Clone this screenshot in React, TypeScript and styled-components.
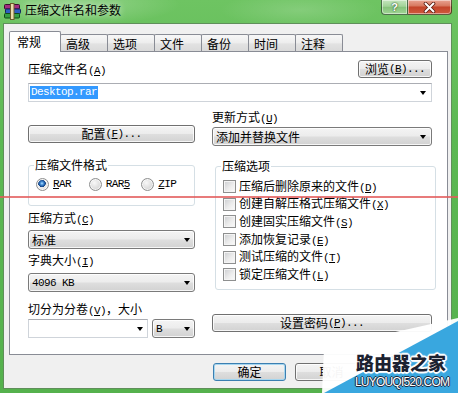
import React from "react";
import styled, { createGlobalStyle } from "styled-components";

const cjk = `"Noto Sans CJK SC", "Liberation Sans", sans-serif`;
const mono = `"Liberation Mono", "DejaVu Sans Mono", monospace`;

const GlobalStyle = createGlobalStyle`
  html, body {
    margin: 0;
    padding: 0;
    background: #56b24e;
  }
  #root {
    width: 458px;
    height: 393px;
    overflow: hidden;
  }
`;

const Window = styled.div`
  position: relative;
  width: 458px;
  height: 393px;
  overflow: hidden;
  display: flex;
  flex-direction: column;
  font-family: ${cjk};
  font-size: 12px;
  line-height: 14px;
  color: #000;
  background:
    radial-gradient(ellipse 110px 22px at 70px 4px, rgba(255, 255, 255, 0.28), rgba(255, 255, 255, 0) 100%),
    radial-gradient(ellipse 80px 18px at 300px 10px, rgba(255, 255, 255, 0.16), rgba(255, 255, 255, 0) 100%),
    linear-gradient(180deg, #6ec462 0%, #5cb853 35%, #55b14d 100%);
`;

const TitleBar = styled.div`
  height: 23px;
  flex: none;
  display: flex;
  align-items: flex-start;
`;

const AppIcon = styled.svg`
  flex: none;
  margin: 3px 0 0 3px;
`;

const Title = styled.span`
  margin-left: 3px;
  line-height: 20px;
  text-shadow: 0 0 6px rgba(255, 255, 255, 0.75);
`;

const Caption = styled.div`
  display: flex;
  margin-left: auto;
  margin-right: 6px;
`;

const CaptionButton = styled.div<{ $close?: boolean }>`
  box-sizing: border-box;
  height: 15px;
  width: ${(p) => (p.$close ? 44 : 27)}px;
  display: flex;
  align-items: center;
  justify-content: center;
  border: 1px solid rgba(20, 50, 20, 0.65);
  border-top: none;
  ${(p) => (p.$close ? "border-left: none; border-bottom-right-radius: 4px;" : "border-bottom-left-radius: 4px;")}
  background: ${(p) =>
    p.$close
      ? "linear-gradient(180deg, #e9a392 0%, #d87a62 40%, #c4442a 52%, #cf5a3e 100%)"
      : "linear-gradient(180deg, #c4e5bd 0%, #a2d398 45%, #86c37b 52%, #a0d595 100%)"};
  box-shadow: inset 0 0 0 1px rgba(255, 255, 255, 0.45);
`;

const HelpGlyph = styled.span`
  font: bold 11px "Liberation Sans", sans-serif;
  line-height: 12px;
  color: #fff;
  text-shadow: 0 0 2px #2d5a2a, 0 0 1px #2d5a2a;
`;

const Frame = styled.div`
  flex: 1;
  margin: 0 6px 4px 3px;
  border: 1px solid #5f8f5a;
  background: #f0f0f0;
  padding: 7px 3px 0 5px;
  display: flex;
  flex-direction: column;
`;

const TabStrip = styled.div`
  display: flex;
  align-items: flex-end;
  height: 20px;
  position: relative;
  z-index: 1;
`;

const Tab = styled.div<{ $active?: boolean }>`
  box-sizing: border-box;
  position: relative;
  z-index: ${(p) => (p.$active ? 2 : 1)};
  width: ${(p) => (p.$active ? 52 : 48)}px;
  height: ${(p) => (p.$active ? 21 : 17)}px;
  margin-bottom: ${(p) => (p.$active ? -1 : 0)}px;
  margin-left: ${(p) => (p.$active ? 0 : -1)}px;
  padding: ${(p) => (p.$active ? "3px 0 0 7px" : "1px 0 0 5px")};
  line-height: ${(p) => (p.$active ? 14 : 15)}px;
  border: 1px solid #898c95;
  border-bottom: none;
  border-radius: 2px 2px 0 0;
  background: ${(p) =>
    p.$active ? "#fff" : "linear-gradient(180deg, #f7f7f7 0%, #ededed 50%, #e2e2e2 55%, #dadada 100%)"};
  white-space: nowrap;
`;

const Panel = styled.div`
  box-sizing: border-box;
  height: 304px;
  background: #fff;
  border: 1px solid #898c95;
  padding: 8px 15px 0 18px;
`;

const Footer = styled.div`
  display: flex;
  gap: 9px;
  margin-top: 8px;
  padding-left: 204px;
`;

const FileRow = styled.div`
  display: flex;
  align-items: flex-end;
  justify-content: space-between;
  height: 18px;
`;

const Label = styled.div<{ $mt?: number }>`
  margin-top: ${(p) => p.$mt ?? 0}px;
  line-height: 14px;
  white-space: nowrap;
`;

const Latin = styled.span`
  font-family: ${mono};
  font-size: 11px;
  letter-spacing: -0.6px;
`;

const PushButton = styled.button<{ $w?: number; $mt?: number; $default?: boolean }>`
  box-sizing: border-box;
  flex: none;
  width: ${(p) => (p.$w ? `${p.$w}px` : "100%")};
  height: 18px;
  margin: ${(p) => p.$mt ?? 0}px 0 0 0;
  padding: 0;
  display: flex;
  align-items: center;
  justify-content: center;
  font-family: ${cjk};
  font-size: 12px;
  line-height: 14px;
  color: #000;
  border: 1px solid ${(p) => (p.$default ? "#3c7fb1" : "#707070")};
  border-radius: 3px;
  background: linear-gradient(180deg, #f4f4f4 0%, #ececec 48%, #dedede 52%, #d2d2d2 100%);
  box-shadow: inset 0 0 0 1px ${(p) => (p.$default ? "#a6d6ef" : "rgba(255, 255, 255, 0.8)")};
  white-space: nowrap;
`;

const EditCombo = styled.div<{ $w?: number; $mt?: number }>`
  box-sizing: border-box;
  width: ${(p) => (p.$w ? `${p.$w}px` : "100%")};
  height: 19px;
  margin-top: ${(p) => p.$mt ?? 0}px;
  display: flex;
  align-items: center;
  padding-left: 1px;
  background: #fff;
  border: 1px solid #cfd4da;
  border-top-color: #abadb3;
`;

const DropSelect = styled.div<{ $w?: number; $mt?: number }>`
  box-sizing: border-box;
  width: ${(p) => (p.$w ? `${p.$w}px` : "100%")};
  height: 19px;
  margin-top: ${(p) => p.$mt ?? 0}px;
  display: flex;
  align-items: center;
  padding-left: 3px;
  border: 1px solid #7a7a7a;
  border-radius: 3px;
  background: linear-gradient(180deg, #f4f4f4 0%, #ececec 48%, #dedede 52%, #d2d2d2 100%);
  box-shadow: inset 0 0 0 1px rgba(255, 255, 255, 0.8);
  white-space: nowrap;
`;

const Arrow = styled.span<{ $mr?: number }>`
  flex: none;
  margin-left: auto;
  margin-right: ${(p) => p.$mr ?? 4}px;
  width: 0;
  height: 0;
  border-left: 3.5px solid transparent;
  border-right: 3.5px solid transparent;
  border-top: 4px solid #000;
`;

const Selected = styled.span`
  font-family: ${mono};
  font-size: 11px;
  letter-spacing: -0.6px;
  line-height: 13px;
  padding: 0 1px;
  background: #3399ff;
  color: #fff;
`;

const Columns = styled.div`
  display: flex;
  gap: 17px;
  margin-top: 8px;
`;

const Column = styled.div<{ $w: number }>`
  width: ${(p) => p.$w}px;
  display: flex;
  flex-direction: column;
`;

const Group = styled.fieldset<{ $mt?: number; $ml?: number; $mr?: number; $pb?: number }>`
  margin: ${(p) => p.$mt ?? 0}px ${(p) => p.$mr ?? 0}px 0 ${(p) => p.$ml ?? 0}px;
  padding: 5px 0 ${(p) => p.$pb ?? 5}px 7px;
  min-width: 0;
  border: 1px solid #d5dfe5;
  border-radius: 3px;
`;

const Legend = styled.legend`
  margin-left: -2px;
  padding: 0 1px;
  line-height: 14px;
`;

const RadioRow = styled.div`
  display: flex;
  height: 14px;
  align-items: center;
`;

const RadioItem = styled.label`
  width: 54px;
  display: flex;
  align-items: center;
  gap: 4px;
`;

const Radio = styled.span<{ $checked?: boolean }>`
  box-sizing: border-box;
  flex: none;
  width: 13px;
  height: 13px;
  border-radius: 50%;
  border: 1px solid #8e8f8f;
  background: ${(p) =>
    p.$checked
      ? "radial-gradient(circle at 45% 40%, #bfe4ff 0, #5aa2e4 1.2px, #1d5aa6 2.8px, #14417e 3.6px, rgba(0,0,0,0) 3.9px), radial-gradient(circle at 40% 35%, #f8f8f8 0%, #d9d9d9 100%)"
      : "radial-gradient(circle at 40% 35%, #f8f8f8 0%, #dcdcdc 60%, #c9c9c9 100%)"};
  box-shadow: inset 0 0 0 1px rgba(255, 255, 255, 0.7);
`;

const CheckRow = styled.label`
  height: 17.6px;
  display: flex;
  align-items: center;
  gap: 3px;
  white-space: nowrap;
`;

const CheckBox = styled.span`
  box-sizing: border-box;
  flex: none;
  width: 13px;
  height: 13px;
  border: 1px solid #8e8f8f;
  background: linear-gradient(135deg, #cbcdd0 0%, #ececec 55%, #fbfbfb 100%);
  box-shadow: inset 0 0 0 1px #f4f4f4;
`;

const ComboRow = styled.div`
  display: flex;
  gap: 4px;
  margin-top: 1px;
`;

const RedLine = styled.div`
  position: absolute;
  left: 0;
  right: 0;
  top: 196px;
  height: 2px;
  background: rgba(226, 90, 90, 0.8);
  pointer-events: none;
`;

const Watermark = styled.div`
  position: absolute;
  left: 316px;
  top: 316px;
  width: 142px;
  height: 77px;
  pointer-events: none;
`;

const WatermarkTitle = styled.div`
  position: absolute;
  left: 40px;
  top: 37px;
  font-family: ${cjk};
  font-size: 18px;
  font-weight: 900;
  line-height: 18px;
  color: #1c2231;
  white-space: nowrap;
  text-shadow:
    1px 0 0 #fff, -1px 0 0 #fff, 0 1px 0 #fff, 0 -1px 0 #fff,
    1px 1px 0 #fff, -1px -1px 0 #fff, 1px -1px 0 #fff, -1px 1px 0 #fff,
    2px 0 1px #fff, -2px 0 1px #fff, 0 2px 1px #fff, 0 -2px 1px #fff;
`;

const WatermarkSite = styled.div`
  position: absolute;
  left: 39px;
  top: 60px;
  font-family: "Liberation Sans", sans-serif;
  font-size: 12px;
  line-height: 12px;
  letter-spacing: -0.8px;
  color: #fff;
  white-space: nowrap;
  text-shadow:
    1px 0 0 #1c2a40, -1px 0 0 #1c2a40, 0 1px 0 #1c2a40, 0 -1px 0 #1c2a40;
`;

const Acc = ({ k, dots }: { k: string; dots?: boolean }) => (
  <Latin>
    (<u>{k}</u>){dots ? "..." : ""}
  </Latin>
);

const tabs = ["常规", "高级", "选项", "文件", "备份", "时间", "注释"];

const options: [string, string][] = [
  ["压缩后删除原来的文件", "D"],
  ["创建自解压格式压缩文件", "X"],
  ["创建固实压缩文件", "S"],
  ["添加恢复记录", "E"],
  ["测试压缩的文件", "T"],
  ["锁定压缩文件", "L"],
];

export default function App() {
  return (
    <>
      <GlobalStyle />
      <Window>
        <TitleBar>
          <AppIcon width="19" height="17" viewBox="0 0 19 17">
            <rect x="1.5" y="1.5" width="15" height="4.5" rx="1" fill="#a2307f" stroke="#3b0f2e" />
            <rect x="2.5" y="6" width="15" height="4.5" rx="1" fill="#2d5fc2" stroke="#10245a" />
            <rect x="1.5" y="10.5" width="15" height="4.5" rx="1" fill="#35a043" stroke="#104a18" />
            <rect x="7.5" y="0.5" width="3.5" height="16" fill="#eadcab" stroke="#6d5d2c" />
          </AppIcon>
          <Title>压缩文件名和参数</Title>
          <Caption>
            <CaptionButton>
              <HelpGlyph>?</HelpGlyph>
            </CaptionButton>
            <CaptionButton $close>
              <svg width="13" height="11" viewBox="0 0 13 11">
                <path d="M2.5 1.5 L10.5 9.5 M10.5 1.5 L2.5 9.5" stroke="#5a1a10" strokeWidth="3.6" strokeLinecap="round" />
                <path d="M2.5 1.5 L10.5 9.5 M10.5 1.5 L2.5 9.5" stroke="#fff" strokeWidth="2" strokeLinecap="round" />
              </svg>
            </CaptionButton>
          </Caption>
        </TitleBar>
        <Frame>
          <TabStrip>
            {tabs.map((t, i) => (
              <Tab key={t} $active={i === 0}>
                {t}
              </Tab>
            ))}
          </TabStrip>
          <Panel>
            <FileRow>
              <Label>
                压缩文件名<Acc k="A" />
              </Label>
              <PushButton $w={74}>
                浏览<Acc k="B" dots />
              </PushButton>
            </FileRow>
            <EditCombo $mt={5}>
              <Selected>Desktop.rar</Selected>
              <Arrow $mr={5} />
            </EditCombo>
            <Columns>
              <Column $w={167}>
                <PushButton $mt={15}>
                  配置<Acc k="F" dots />
                </PushButton>
                <Group $mt={15} $pb={14}>
                  <Legend>压缩文件格式</Legend>
                  <RadioRow>
                    <RadioItem>
                      <Radio $checked />
                      <Latin>
                        <u>R</u>AR
                      </Latin>
                    </RadioItem>
                    <RadioItem>
                      <Radio />
                      <Latin>
                        RAR<u>5</u>
                      </Latin>
                    </RadioItem>
                    <RadioItem>
                      <Radio />
                      <Latin>
                        <u>Z</u>IP
                      </Latin>
                    </RadioItem>
                  </RadioRow>
                </Group>
                <Label $mt={5}>
                  压缩方式<Acc k="C" />
                </Label>
                <DropSelect $mt={3}>
                  标准
                  <Arrow />
                </DropSelect>
                <Label $mt={4}>
                  字典大小<Acc k="I" />
                </Label>
                <DropSelect $mt={4}>
                  <Latin>4096 KB</Latin>
                  <Arrow />
                </DropSelect>
                <Label $mt={10}>
                  切分为分卷<Acc k="V" />，大小
                </Label>
                <ComboRow>
                  <EditCombo $w={120}>
                    <Arrow $mr={4} />
                  </EditCombo>
                  <DropSelect $w={43}>
                    <Latin>B</Latin>
                    <Arrow />
                  </DropSelect>
                </ComboRow>
              </Column>
              <Column $w={220}>
                <Label>
                  更新方式<Acc k="U" />
                </Label>
                <DropSelect $mt={1}>
                  添加并替换文件
                  <Arrow $mr={5} />
                </DropSelect>
                <Group $mt={13} $ml={3} $mr={-4}>
                  <Legend>压缩选项</Legend>
                  {options.map(([text, key]) => (
                    <CheckRow key={key}>
                      <CheckBox />
                      <span>
                        {text}
                        <Acc k={key} />
                      </span>
                    </CheckRow>
                  ))}
                </Group>
                <PushButton $mt={24}>
                  设置密码<Acc k="P" dots />
                </PushButton>
              </Column>
            </Columns>
          </Panel>
          <Footer>
            <PushButton $w={73} $default>
              确定
            </PushButton>
            <PushButton $w={73}>取消</PushButton>
          </Footer>
        </Frame>
        <RedLine />
        <Watermark>
          <svg width="142" height="77" viewBox="0 0 142 77">
            <polygon points="6,77 8,32 142,2 142,77" fill="rgba(255,255,255,0.96)" />
            <polygon points="8,77 142,5 142,77" fill="#39a7df" />
          </svg>
          <WatermarkTitle>路由器之家</WatermarkTitle>
          <WatermarkSite>LUYOUQI520.COM</WatermarkSite>
        </Watermark>
      </Window>
    </>
  );
}
